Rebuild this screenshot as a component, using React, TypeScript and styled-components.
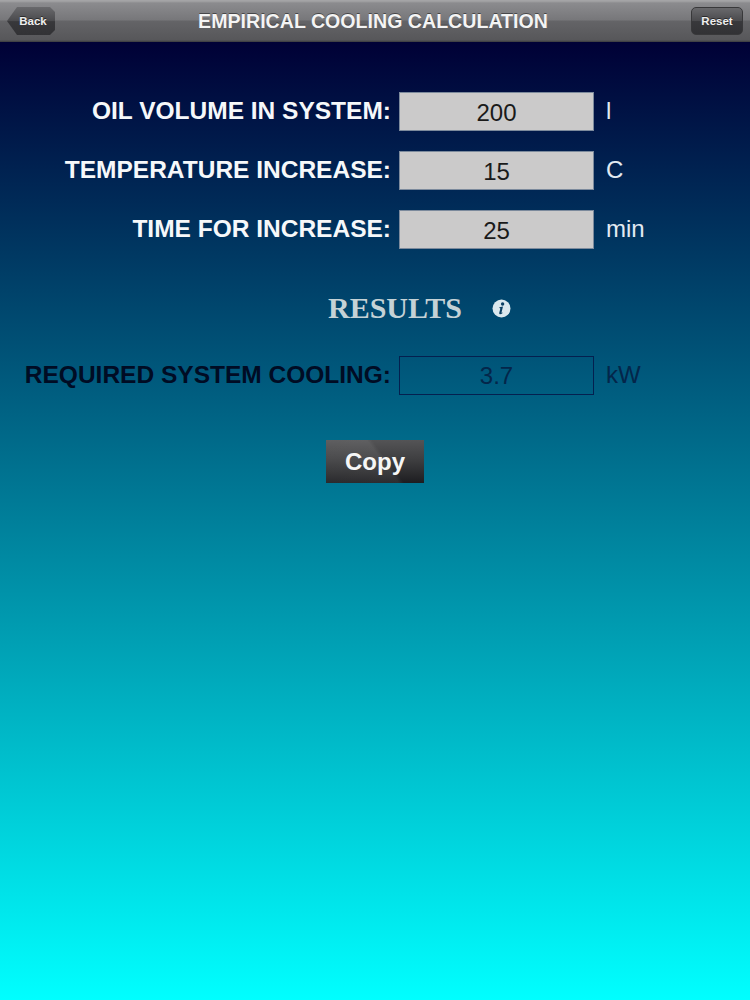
import React from 'react';
import styled, { createGlobalStyle } from 'styled-components';

const GlobalStyle = createGlobalStyle`
    html, body {
        margin: 0;
        height: 100%;
    }
    body {
        font-family: 'Liberation Sans', Arial, sans-serif;
        background: #000036;
    }
`;

const Page = styled.div`
    width: 750px;
    height: 1000px;
    display: flex;
    flex-direction: column;
    overflow: hidden;
`;

const NavBar = styled.header`
    height: 42px;
    box-sizing: border-box;
    padding: 7px;
    display: flex;
    align-items: flex-start;
    justify-content: space-between;
    background: linear-gradient(#a4a4a6 0, #a4a4a6 1px, #8b8b8e 3px, #77777a 20px, #646467 21px, #57575a 40px, #3a3a3e 42px);
`;

const NavTitle = styled.h1`
    flex: 1;
    margin: 2px 0 0;
    text-align: center;
    font-size: 19.6px;
    line-height: 24px;
    font-weight: bold;
    white-space: nowrap;
    color: #f4f4f4;
    text-shadow: 0 -1px 0 rgba(0, 0, 0, 0.45);
`;

const BarButton = styled.button`
    height: 28px;
    width: 52px;
    padding: 0;
    border: 1px solid #38383a;
    border-radius: 5px;
    background: linear-gradient(#69696c, #4a4a4d 50%, #38383b 52%, #323235);
    color: #eeeeee;
    font-family: inherit;
    font-size: 11.5px;
    font-weight: bold;
    text-shadow: 0 -1px 0 rgba(0, 0, 0, 0.5);
`;

const BackButton = styled(BarButton)`
    width: 48px;
    padding-left: 4px;
    border: 0;
    border-radius: 0;
    clip-path: polygon(0 50%, 10px 0, calc(100% - 5px) 0, 100% 5px, 100% calc(100% - 5px), calc(100% - 5px) 100%, 10px 100%);
`;

const Content = styled.main`
    flex: 1;
    display: flex;
    flex-direction: column;
    align-items: center;
    padding-top: 50px;
    background: linear-gradient(#000036 0, #00ffff 100%);
`;

const Grid = styled.div`
    width: 100%;
    display: grid;
    grid-template-columns: 391px 195px 1fr;
    column-gap: 8px;
    row-gap: 20px;
    align-items: center;
`;

const Label = styled.label<{ $dark?: boolean }>`
    padding-bottom: 2px;
    text-align: right;
    font-size: 24.5px;
    font-weight: bold;
    white-space: nowrap;
    color: ${({ $dark }) => ($dark ? '#000c24' : '#f6f8fa')};
`;

const Field = styled.div<{ $outlined?: boolean }>`
    height: 39px;
    box-sizing: border-box;
    display: flex;
    align-items: center;
    justify-content: center;
    padding-top: ${({ $outlined }) => ($outlined ? '0' : '2px')};
    font-size: 24px;
    border: ${({ $outlined }) => ($outlined ? '1px solid #04204f' : '1px solid #7c8a9c')};
    background: ${({ $outlined }) => ($outlined ? 'transparent' : '#cbcaca')};
    color: ${({ $outlined }) => ($outlined ? '#04264a' : '#1a1a1a')};
`;

const Unit = styled.span<{ $dark?: boolean }>`
    margin-left: 4px;
    padding-bottom: 2px;
    font-size: 24px;
    color: ${({ $dark }) => ($dark ? '#04264a' : '#e2eaf2')};
`;

const ResultsHeader = styled.div`
    width: 100%;
    box-sizing: border-box;
    padding: 41px 0 30px 328px;
    display: flex;
    align-items: center;
    gap: 30px;
`;

const ResultsTitle = styled.h2`
    margin: 0;
    font-family: 'Liberation Serif', 'Times New Roman', serif;
    font-size: 30px;
    line-height: 36px;
    font-weight: bold;
    color: #c5d2d6;
`;

const InfoBadge = styled.svg`
    width: 19px;
    height: 19px;
    display: block;
`;

const CopyButton = styled.button`
    margin-top: 45px;
    width: 98px;
    height: 43px;
    padding: 0;
    border: 0;
    color: #f6f6f6;
    font-family: inherit;
    font-size: 24px;
    font-weight: bold;
    background:
        linear-gradient(53deg, rgba(255, 255, 255, 0.06) 0, rgba(255, 255, 255, 0.07) 56%, transparent 60%),
        linear-gradient(#545456, #3c3c3e 50%, #1d1d20);
`;

function InfoIcon() {
    return (
        <InfoBadge viewBox="0 0 19 19">
            <circle cx="9.5" cy="9.5" r="9" fill="#dbe8ee" />
            <circle cx="10.6" cy="5" r="1.7" fill="#0b3f63" />
            <path d="M7.4 8.2 L11 7.6 L9.5 13.4 Q9.4 14 10.4 13.4 L10.7 14 Q9 15.3 7.9 15.2 Q7 15 7.2 14 L8.3 9.7 Q8.4 9 7.4 9 Z" fill="#0b3f63" />
        </InfoBadge>
    );
}

const inputs = [
    { label: 'OIL VOLUME IN SYSTEM:', value: '200', unit: 'l' },
    { label: 'TEMPERATURE INCREASE:', value: '15', unit: 'C' },
    { label: 'TIME FOR INCREASE:', value: '25', unit: 'min' }
];

export default function App() {
    return (
        <Page>
            <GlobalStyle />
            <NavBar>
                <BackButton>Back</BackButton>
                <NavTitle>EMPIRICAL COOLING CALCULATION</NavTitle>
                <BarButton>Reset</BarButton>
            </NavBar>
            <Content>
                <Grid>
                    {inputs.map(row => (
                        <React.Fragment key={row.label}>
                            <Label>{row.label}</Label>
                            <Field>{row.value}</Field>
                            <Unit>{row.unit}</Unit>
                        </React.Fragment>
                    ))}
                </Grid>
                <ResultsHeader>
                    <ResultsTitle>RESULTS</ResultsTitle>
                    <InfoIcon />
                </ResultsHeader>
                <Grid>
                    <Label $dark>REQUIRED SYSTEM COOLING:</Label>
                    <Field $outlined>3.7</Field>
                    <Unit $dark>kW</Unit>
                </Grid>
                <CopyButton>Copy</CopyButton>
            </Content>
        </Page>
    );
}
